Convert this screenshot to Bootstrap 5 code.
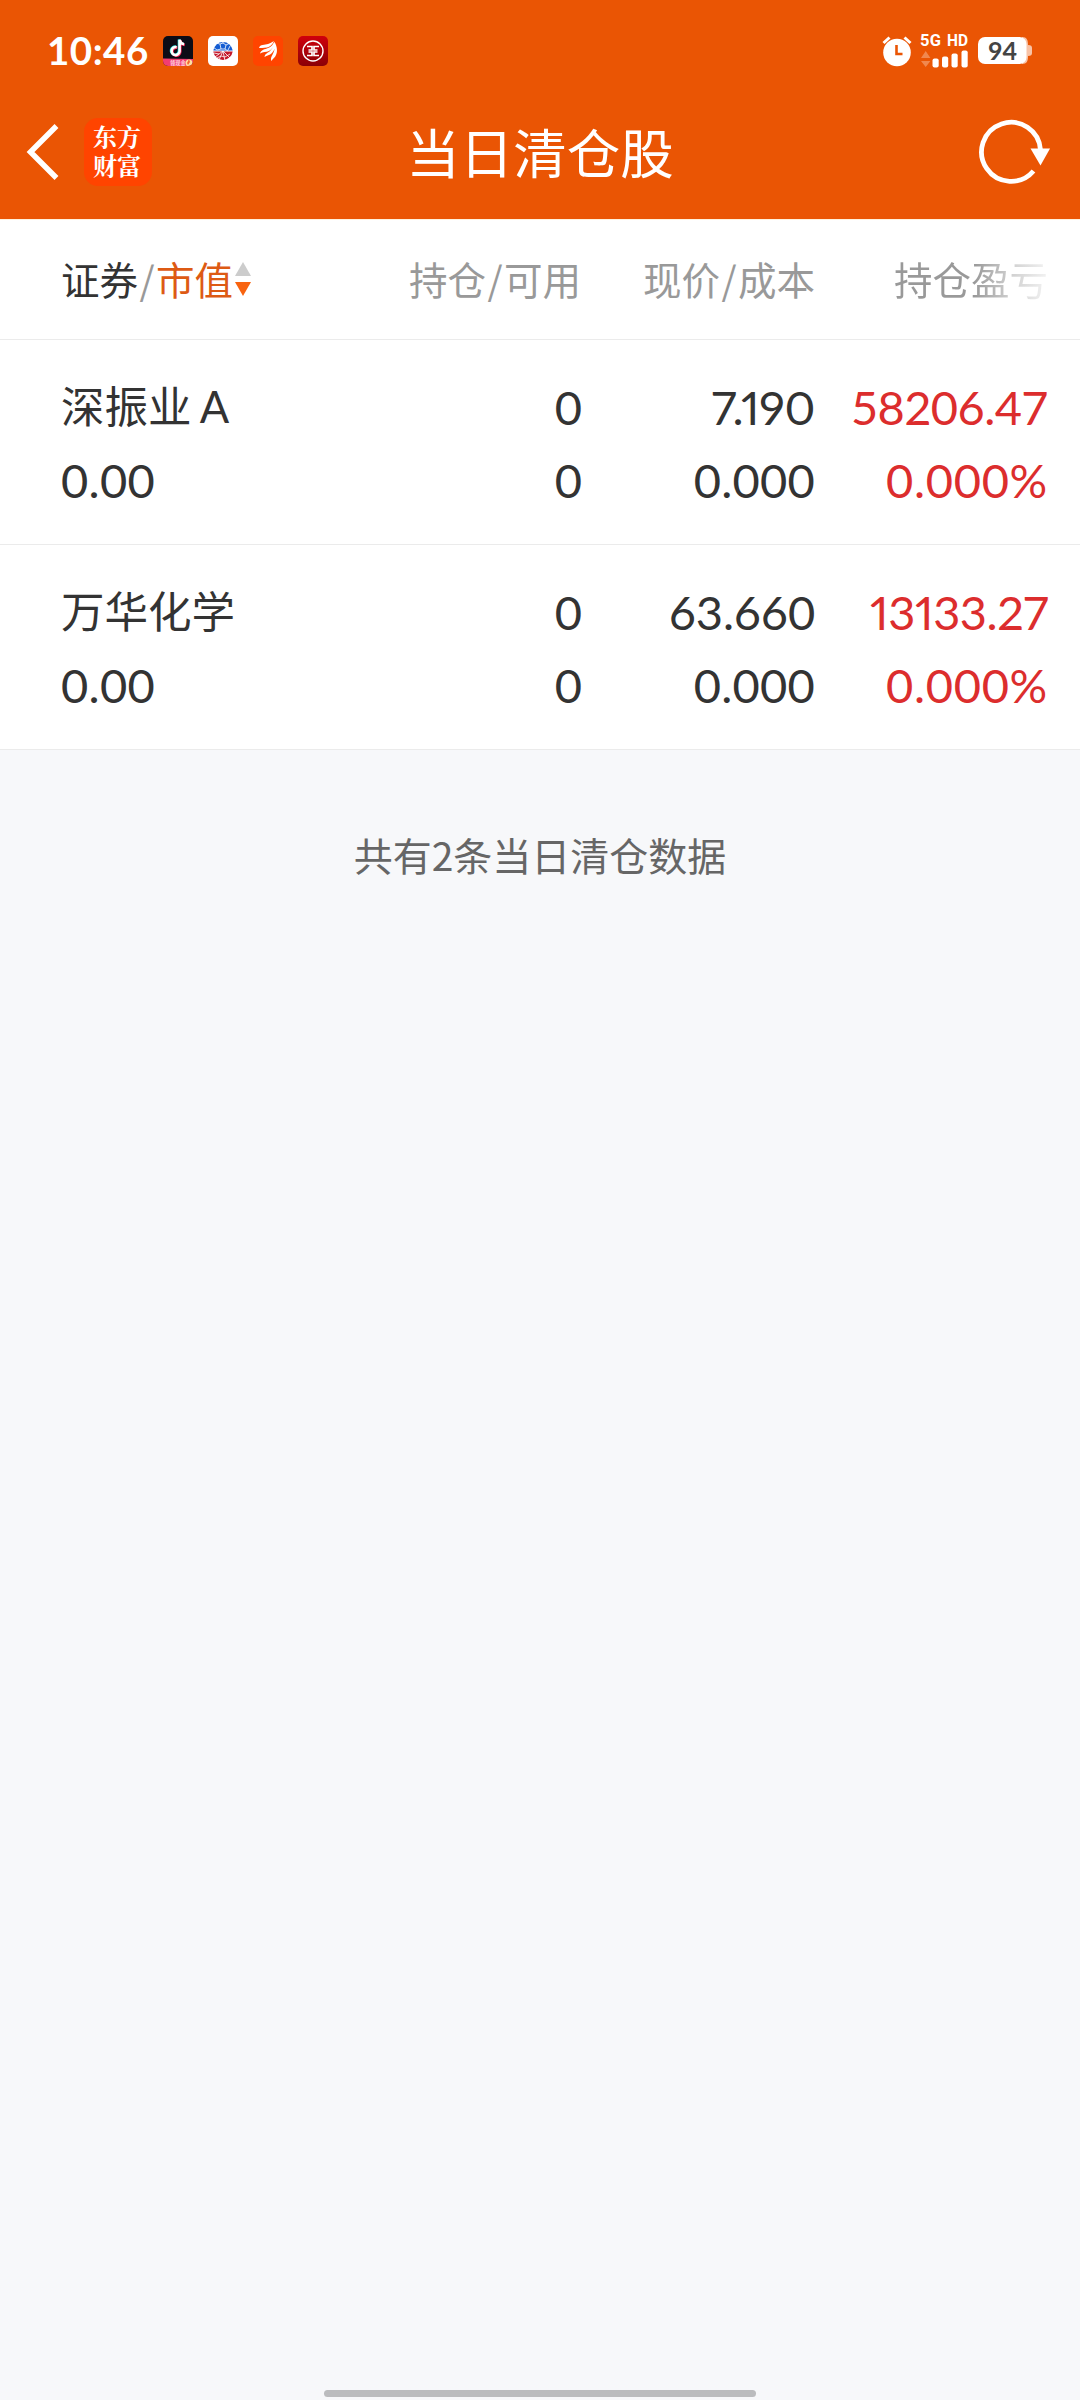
<!DOCTYPE html>
<html lang="zh-CN">
<head>
<meta charset="utf-8">
<meta name="viewport" content="width=device-width, initial-scale=1">
<title>当日清仓股</title>
<link href="https://cdn.jsdelivr.net/npm/bootstrap@5.3.0/dist/css/bootstrap.min.css" rel="stylesheet">
<style>
  body { background: #f7f8fa; color: #333; font-family: Lato, "Noto Sans CJK SC", sans-serif; min-height: 2400px; }
  svg { display: block; flex: none; overflow: visible; }
  .app-top { background: #ea5504; height: 219px; }
  .status-bar { height: 85px; padding: 17px 48px 0 47px; }
  .clock { font-size: 38.5px; font-weight: 700; line-height: 1; width: 116px; letter-spacing: .5px; padding-bottom: 1px; }
  .app-icons { gap: 15px; }
  .title-bar { height: 134px; padding: 0 30px 0 27px; }
  .side { width: 200px; margin-top: -1px; }
  .brand-tile { width: 68px; height: 68px; border-radius: 14px; background: #ff4400; margin-left: 26px; font: 700 24px/29px "Noto Serif CJK SC", "Noto Sans CJK SC", sans-serif; padding: 0 2px 4px 0; }
  .page-title { font: 400 53.5px/1 "Noto Sans CJK SC", sans-serif; padding: 0 0 3px 3px; }
  .head-row { height: 121px; border-top: 1px solid #fff1dc; border-bottom: 1px solid #ebebeb; color: #999; font: 400 38.5px/1 "Noto Sans CJK SC", sans-serif; padding-bottom: 3px; }
  .grid-row { padding-left: 61px; padding-right: 31px; }
  .c1 { width: 260px; }
  .c2 { width: 260px; text-align: right; }
  .c3 { width: 234px; text-align: right; }
  .c4 { width: 233px; text-align: right; }
  .slash { margin: 0 1.5px; }
  .label-dark { color: #333; }
  .active-sort { color: #dd5a14; }
  .sort-arrows { margin: 2px 0 0 2px; }
  .fade-out { background: linear-gradient(90deg, #999 0, #999 52%, #d0d0d0 76%, #f3f3f3 100%); -webkit-background-clip: text; background-clip: text; color: transparent; }
  .stock { height: 205px; padding-top: 31px; border-bottom: 1px solid #ebebeb; font-size: 47px; line-height: 73px; white-space: nowrap; }
  .stock-name { font-size: 43.5px; word-spacing: -3px; position: relative; top: -1px; }
  .worth { letter-spacing: .3px; }
  .stock .c2 { padding-left: 1px; margin-right: -1px; width: 261px; }
  .stock .c3 { letter-spacing: .2px; }
  .stock .c4 { letter-spacing: -.6px; }
  .stock .c4 .rate { letter-spacing: .7px; }
  .stock .price-wide { letter-spacing: -.2px; }
  .stock .prop { font-variant-numeric: proportional-nums; letter-spacing: -.4px; }
  .gain { color: #dc2d2d; }
  .tally { color: #666; font: 400 39px/1 "Noto Sans CJK SC", sans-serif; padding-top: 85px; }
  .home-bar { width: 432px; height: 7px; border-radius: 4px; background: #bbbcbe; margin-bottom: 3px; }
</style>
</head>
<body class="d-flex flex-column">
<header class="app-top text-white">
  <div class="status-bar d-flex align-items-center justify-content-between">
    <div class="d-flex align-items-center">
      <span class="clock">10:46</span>
      <div class="app-icons d-flex">
        <svg width="30" height="30" viewBox="0 0 30 30"><defs><clipPath id="r"><rect width="30" height="30" rx="5"/></clipPath></defs><g clip-path="url(#r)"><path fill="#0c0c16" d="M0 0h30v30H0z"/><g fill="none" stroke-width="2.6"><path stroke="#25e5e0" d="M13 10.800a4 4 0 1 0 3 4V3.500c.5 3 2 4 4.500 4.500"/><path stroke="#f8285a" d="M14.300 11.800a4 4 0 1 0 3 4V4.500c.5 3 2 4 4.500 4.500"/><path stroke="#fff" d="M13.600 11.200a4 4 0 1 0 3 4V3.800c.5 3 2 4 4.500 4.500"/></g><path fill="#f23d70" d="M0 22.500 30 23v7H0z"/><text x="7" y="28.500" font-size="5.200" font-weight="700" fill="#ffd2dc" font-family="Noto Sans CJK SC">领现金</text><circle cx="26" cy="27" r="3.500" fill="#ffe0a0"/><path fill="#f46530" d="m26 23 1 3-2 3-1-2z"/></g></svg>
        <svg width="30" height="30" viewBox="0 0 30 30"><rect width="30" height="30" rx="5" fill="#fff"/><path fill="#145cd2" d="M5.300 14.500a9.800 9.800 0 0 1 19.400 0z"/><path fill="#c4182b" d="M5.300 15.500h19.400a9.800 9.800 0 0 1-19.400 0z"/><g fill="none" stroke="#fff" stroke-width=".8"><path d="m12 8 3-1 3 2-1 4h-4zM12 8 8 7M15 7V4M18 9l4-2M17 13l3 2M13 13l-4 1-4-3M20 14l2-4"/><path d="m15 15-8 6M15 15l-4 9M15 15l2 10M15 15l7 7M6 17l5 1M9 22l4-2 4 1 5-3"/></g></svg>
        <svg width="30" height="30" viewBox="0 0 30 30"><rect width="30" height="30" rx="5" fill="#ff4400"/><path fill="#fff" d="M6 12C7 8 12 9 15 8s4-2 6-3c-2 4-4 6-7 6.500-3 .7-6 .3-8 .5zM7 17.500c1-4 5-4 8-5.500 4-1.500 5-4 6.500-6.500-.5 5-2.500 8-5.500 9.500-3 1.500-6 .5-9 2.500zM11.500 21c.5-3.500 3.500-4 5.500-6 2.500-2.500 4-5.500 4.500-9 1.500 5 0 8-2.500 11-2.500 2.500-5 2-7.500 4zM18.500 25c-1.500-3 .5-5 2-8.500 1.500-3.500 1.500-7 1-10.500 3 5 3 10 1.500 13-1 2.500-3 3.500-4.500 6z"/></svg>
        <svg width="30" height="30" viewBox="0 0 30 30"><defs><linearGradient id="i" x2="0" y2="1"><stop stop-color="#d0000c"/><stop offset="1" stop-color="#8a0007"/></linearGradient></defs><rect width="30" height="30" rx="5" fill="url(#i)"/><g fill="none" stroke="#fff"><circle cx="15" cy="15" r="10" stroke-width="1.400"/><path stroke-width="1.700" d="M9 10.500h5v3.500h-3.500M21 10.500h-5v3.500h3.500M9 19.500h5V16h-3.500M21 19.500h-5V16h3.500"/></g></svg>
      </div>
    </div>
    <div class="d-flex align-items-center">
      <svg width="30" height="32" viewBox="0 0 30 32" class="me-2"><circle cx="15" cy="17.500" r="13.800" fill="#fff"/><path fill="none" stroke="#fff" stroke-width="3" d="m1.500 8 6-5.500M28.500 8l-6-5.500"/><path fill="none" stroke="#ea5504" stroke-width="2.600" d="M14.500 10v9h6"/></svg>
      <svg width="50" height="36" viewBox="0 0 50 36" class="me-2"><g fill="#fff" font-family="Roboto" font-weight="700" font-size="16.500"><text x="0" y="13.300" textLength="21">5G</text><text x="27" y="13.300" textLength="21" lengthAdjust="spacingAndGlyphs">HD</text></g><path fill="#fff" fill-opacity=".3" d="m1 25 4.700-7 4.700 7zM1 28h9.400l-4.700 6z"/><g fill="#fff"><rect x="12.500" y="25.500" width="6.200" height="9" rx="2"/><rect x="22" y="23.500" width="6.200" height="11" rx="2"/><rect x="31.500" y="20.500" width="6.200" height="14" rx="2"/><rect x="41.500" y="17.500" width="6.200" height="17" rx="2"/></g></svg>
      <svg width="54" height="28" viewBox="0 0 54 28"><path fill="#fff" fill-opacity=".65" d="M44 0c5 0 6 3 6 8 3 0 4 1 4 3v5c0 2-1 3-4 3 0 5-1 8-6 8z"/><rect width="48.500" height="27" rx="7" fill="#fff"/><text x="24.500" y="22.500" text-anchor="middle" font-family="Lato" font-weight="700" font-size="25" fill="#444">94</text></svg>
    </div>
  </div>
  <div class="title-bar d-flex align-items-center justify-content-between">
    <div class="side d-flex align-items-center">
      <svg width="31" height="58" viewBox="0 0 31 58"><path fill="none" stroke="#fff" stroke-width="5.500" d="M29.500 3 3.500 29l26 26"/></svg>
      <div class="brand-tile d-flex flex-column align-items-center justify-content-center"><span>东方</span><span>财富</span></div>
    </div>
    <h1 class="page-title m-0">当日清仓股</h1>
    <div class="side d-flex justify-content-end">
      <svg width="72" height="66" viewBox="0 0 72 66"><path fill="none" stroke="#fff" stroke-width="4.800" d="M62.500 31A29.500 29.500 0 1 0 55.500 52"/><path fill="#fff" d="M52.500 29.500h19.500l-9.500 17z"/></svg>
    </div>
  </div>
</header>
<main class="bg-white">
  <div class="head-row grid-row d-flex align-items-center">
    <div class="c1 d-flex align-items-center"><span class="text-nowrap"><span class="label-dark">证券</span><span class="slash">/</span><span class="active-sort">市值</span></span>
      <svg class="sort-arrows" width="16" height="36" viewBox="0 0 16 36"><path fill="#ccc" d="m8 1 8 14H0z"/><path fill="#f8630f" d="M0 21h16L8 35z"/></svg>
    </div>
    <div class="c2">持仓<span class="slash">/</span>可用</div>
    <div class="c3">现价<span class="slash">/</span>成本</div>
    <div class="c4"><span class="fade-out">持仓盈亏</span></div>
  </div>
  <div class="stock grid-row d-flex">
    <div class="c1"><div class="stock-name">深振业 A</div><div class="worth">0.00</div></div>
    <div class="c2"><div>0</div><div>0</div></div>
    <div class="c3"><div class="prop">7.190</div><div>0.000</div></div>
    <div class="c4 gain"><div>58206.47</div><div class="rate">0.000%</div></div>
  </div>
  <div class="stock grid-row d-flex">
    <div class="c1"><div class="stock-name">万华化学</div><div class="worth">0.00</div></div>
    <div class="c2"><div>0</div><div>0</div></div>
    <div class="c3"><div class="price-wide">63.660</div><div>0.000</div></div>
    <div class="c4 gain"><div class="prop">13133.27</div><div class="rate">0.000%</div></div>
  </div>
</main>
<p class="tally text-center m-0">共有2条当日清仓数据</p>
<div class="home-bar mt-auto mx-auto"></div>
<script src="https://cdn.jsdelivr.net/npm/bootstrap@5.3.0/dist/js/bootstrap.bundle.min.js"></script>
</body>
</html>
